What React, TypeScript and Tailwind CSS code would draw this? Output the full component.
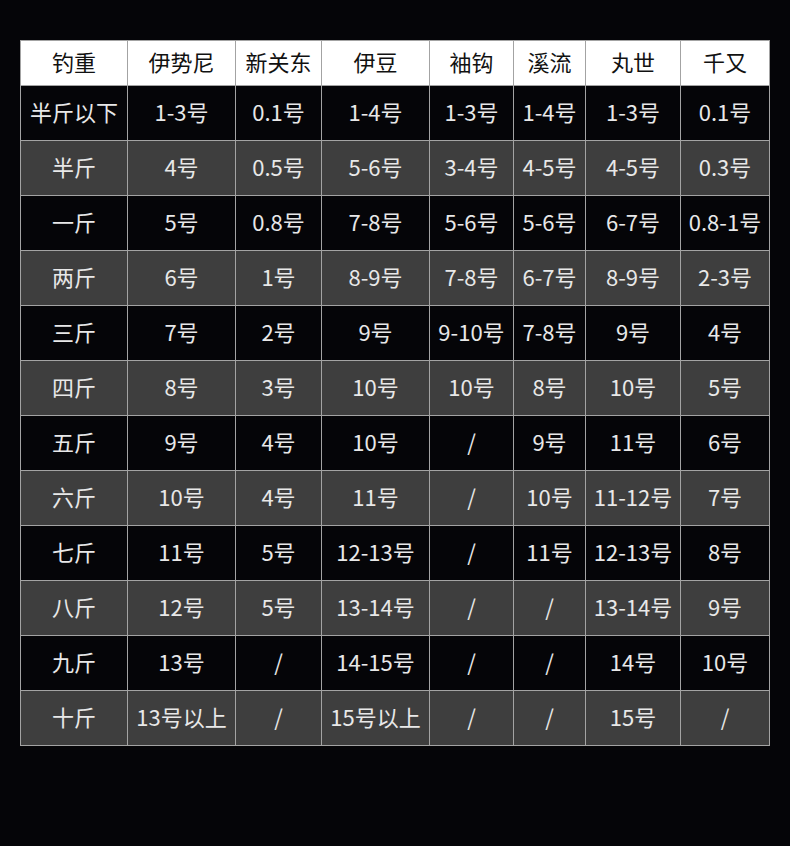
import React from "react";

const headers = ["钓重", "伊势尼", "新关东", "伊豆", "袖钩", "溪流", "丸世", "千又"];
const rows: string[][] = [
  ["半斤以下", "1-3号", "0.1号", "1-4号", "1-3号", "1-4号", "1-3号", "0.1号"],
  ["半斤", "4号", "0.5号", "5-6号", "3-4号", "4-5号", "4-5号", "0.3号"],
  ["一斤", "5号", "0.8号", "7-8号", "5-6号", "5-6号", "6-7号", "0.8-1号"],
  ["两斤", "6号", "1号", "8-9号", "7-8号", "6-7号", "8-9号", "2-3号"],
  ["三斤", "7号", "2号", "9号", "9-10号", "7-8号", "9号", "4号"],
  ["四斤", "8号", "3号", "10号", "10号", "8号", "10号", "5号"],
  ["五斤", "9号", "4号", "10号", "/", "9号", "11号", "6号"],
  ["六斤", "10号", "4号", "11号", "/", "10号", "11-12号", "7号"],
  ["七斤", "11号", "5号", "12-13号", "/", "11号", "12-13号", "8号"],
  ["八斤", "12号", "5号", "13-14号", "/", "/", "13-14号", "9号"],
  ["九斤", "13号", "/", "14-15号", "/", "/", "14号", "10号"],
  ["十斤", "13号以上", "/", "15号以上", "/", "/", "15号", "/"],
];

export default function App() {
  return (
    <div
      className="w-[790px] h-[846px] bg-[#050508] pt-[40px] pl-[20px]"
      style={{ fontFamily: '"Noto Sans CJK SC", "Noto Sans", sans-serif' }}
    >
      <div className="w-[750px] grid grid-cols-[106px_107px_85px_107px_83px_71px_94px_88px] gap-px p-px bg-[#a3a3a3]">
        {headers.map((h) => (
          <div
            key={h}
            className="h-[44px] pb-[4px] bg-white text-[#111] text-[22px] flex items-center justify-center whitespace-nowrap"
          >
            {h}
          </div>
        ))}
        {rows.map((r, i) =>
          r.map((c, j) => (
            <div
              key={i + "-" + j}
              className={
                "h-[54px] pb-[4px] text-[#e8e8e8] text-[22px] flex items-center justify-center whitespace-nowrap " +
                (i % 2 === 0 ? "bg-[#050508]" : "bg-[#3e3e3e]")
              }
            >
              {c}
            </div>
          ))
        )}
      </div>
    </div>
  );
}
